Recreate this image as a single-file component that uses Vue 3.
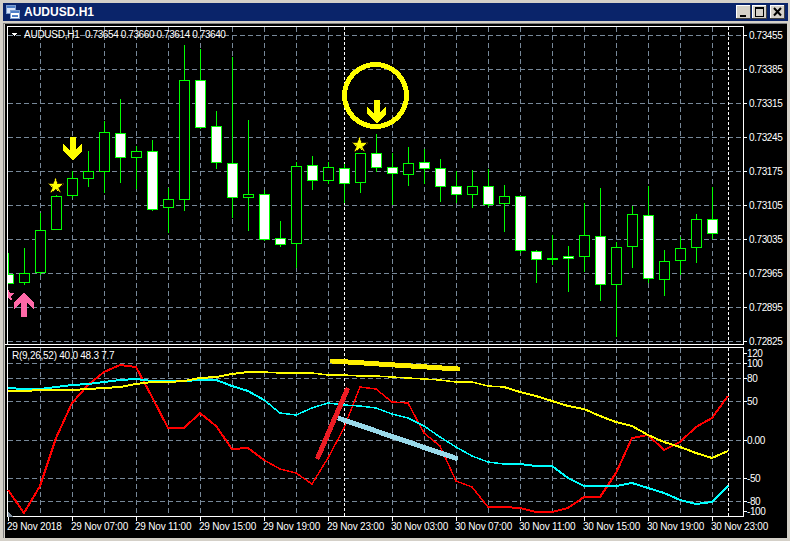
<script setup>
const candles = [
  // [high, low, body top, body bottom, filled]
  [253, 284, 274, 283, 1], [248, 285, 273, 282, 0], [213, 275, 230, 272, 0], [195, 230, 196, 229, 0],
  [171, 198, 178, 195, 0], [151, 187, 171, 178, 0], [121, 193, 132, 171, 0], [99, 183, 133, 157, 1],
  [146, 189, 151, 157, 0], [140, 211, 151, 209, 1], [188, 233, 199, 207, 0], [45, 211, 80, 199, 0],
  [49, 129, 80, 127, 1], [111, 169, 126, 162, 1], [57, 218, 163, 197, 1], [120, 231, 194, 197, 0],
  [190, 241, 194, 239, 1], [221, 247, 238, 244, 1], [162, 268, 166, 243, 0], [156, 190, 165, 180, 1],
  [162, 184, 167, 180, 0], [164, 203, 168, 183, 1], [153, 193, 153, 182, 0], [134, 172, 153, 167, 1],
  [153, 205, 167, 173, 1], [147, 186, 163, 174, 0], [149, 184, 162, 168, 1], [159, 202, 168, 186, 1],
  [171, 203, 186, 194, 1], [170, 208, 186, 194, 0], [169, 207, 186, 204, 1], [185, 232, 196, 203, 0],
  [196, 253, 196, 250, 1], [250, 283, 251, 259, 1], [235, 265, 258, 259, 1], [246, 292, 256, 258, 1],
  [203, 272, 235, 256, 0], [188, 301, 236, 284, 1], [242, 337, 247, 284, 0], [206, 268, 214, 246, 0],
  [186, 283, 215, 278, 1], [250, 296, 261, 279, 0], [237, 275, 248, 260, 0], [214, 263, 219, 247, 0],
  [187, 239, 219, 233, 1]
].map((c, i) => ({ x: 8 + i * 16, high: c[0], low: c[1], top: c[2], bottom: c[3], filled: c[4] }))

const gridX = Array.from({ length: 22 }, (_, i) => 40 + i * 32).filter((x) => x !== 360)
const prices = ['0.73455', '0.73385', '0.73315', '0.73245', '0.73175', '0.73105', '0.73035', '0.72965', '0.72895', '0.72825']
  .map((label, i) => ({ label, y: 35 + i * 34 }))
const levels = [
  { label: '120', y: 353, grid: false }, { label: '100', y: 363, grid: true }, { label: '80', y: 378, grid: true },
  { label: '50', y: 401, grid: true }, { label: '0.00', y: 440, grid: true }, { label: '-50', y: 478, grid: true },
  { label: '-80', y: 501, grid: true }, { label: '-100', y: 511, grid: false }
]
const times = [
  { label: '29 Nov 2018', x: 8 }, { label: '29 Nov 07:00', x: 72 }, { label: '29 Nov 11:00', x: 136 },
  { label: '29 Nov 15:00', x: 200 }, { label: '29 Nov 19:00', x: 264 }, { label: '29 Nov 23:00', x: 328 },
  { label: '30 Nov 03:00', x: 392 }, { label: '30 Nov 07:00', x: 456 }, { label: '30 Nov 11:00', x: 520 },
  { label: '30 Nov 15:00', x: 584 }, { label: '30 Nov 19:00', x: 648 }, { label: '30 Nov 23:00', x: 712 }
]

// each line is thick at both ends and thinner in the middle, as in the screenshot
const lines = [
  {
    color: '#ff0000',
    left: '8,490 24,513 40,486 56,438 72,403 88,385 104,372 120,365 136,367 152,397 168,428 184,428 200,413 216,426 232,449 248,448 264,460',
    mid: '264,460 280,469 296,473 312,484 328,458 344,428 360,387 376,389 392,402 408,403 424,433 440,446 456,481 472,487 488,507 504,507',
    right: '504,507 520,508 536,512 552,512 568,508 584,497 600,497 616,473 632,438 648,435 664,450 680,442 696,427 712,418 728,396'
  },
  {
    color: '#00ffff',
    left: '8,388 24,389 40,389 56,387 72,385 88,384 104,382 120,380 136,379 152,381 168,381 184,381 200,380 216,380 232,386 248,391 264,400',
    mid: '264,400 280,413 296,415 312,408 328,403 344,405 360,406 376,408 392,414 408,418 424,426 440,437 456,447 472,456 488,462 504,464',
    right: '504,464 520,464 536,466 552,466 568,478 584,486 600,486 616,486 632,483 648,488 664,493 680,500 696,504 712,502 728,486'
  },
  {
    color: '#ffff00',
    left: '8,391 24,391 40,390 56,390 72,390 88,389 104,388 120,387 136,384 152,382 168,382 184,381 200,378 216,377 232,374 248,372 264,372',
    mid: '264,372 280,373 312,373 328,375 344,375 360,376 376,376 392,377 408,378 424,379 440,380 456,382 472,382 488,386 504,387',
    right: '504,387 520,392 536,396 552,401 568,406 584,409 600,416 616,422 632,426 648,435 664,442 680,447 696,453 712,458 728,451'
  }
]
</script>

<template>
  <div class="window">
    <div class="titlebar">
      <svg class="app-icon" width="14" height="14" viewBox="0 0 14 14" shape-rendering="crispEdges">
        <rect x="0.5" y="0.5" width="9" height="8" fill="#d8e4f8" stroke="#7f9fd0" />
        <rect x="1" y="1" width="8" height="2" fill="#4f7fc8" />
        <rect x="4.5" y="5.5" width="9" height="8" fill="#fff" stroke="#7f9fd0" />
        <rect x="5" y="6" width="8" height="2" fill="#4f7fc8" />
        <path d="M6 12l1-2 1 2 1-2 1 2 1-2 1 2" fill="none" stroke="#4f7fc8" />
      </svg>
      <span class="title">AUDUSD.H1</span>
      <div class="buttons">
        <button class="btn">
          <svg width="15" height="14" viewBox="0 0 15 14" shape-rendering="crispEdges"><rect x="4" y="10" width="6" height="2" fill="#000" /></svg>
        </button>
        <button class="btn">
          <svg width="15" height="14" viewBox="0 0 15 14" shape-rendering="crispEdges"><path d="M3.5 3.500h8v8h-8z" fill="none" stroke="#000" /><rect x="3" y="2" width="9" height="2" fill="#000" /></svg>
        </button>
        <button class="btn btn-close">
          <svg width="15" height="14" viewBox="0 0 15 14"><path d="M4 3l7 7.500M11 3l-7 7.500" fill="none" stroke="#000" stroke-width="2" /></svg>
        </button>
      </div>
    </div>

    <div class="frame">
      <div class="inner">
        <svg class="chart" width="782" height="514" viewBox="5 24 782 514" shape-rendering="crispEdges">
          <defs>
            <clipPath id="pane"><rect x="8" y="27" width="735" height="317" /></clipPath>
          </defs>

          <!-- pane borders -->
          <path d="M7.500 344.500V26.500H743.500V344.500M5 344.500H743.500" fill="none" stroke="#fff" />
          <path d="M7.500 516.500V347.500H743.500V516.500H7.500" fill="none" stroke="#fff" />

          <!-- grid -->
          <g class="grid">
            <line v-for="x in gridX" :key="'m' + x" :x1="x + 0.5" :x2="x + 0.5" y1="27" y2="344" />
            <line v-for="p in prices" :key="p.label" x1="8" x2="743" :y1="p.y + 0.5" :y2="p.y + 0.5" />
            <line v-for="x in gridX" :key="'s' + x" :x1="x + 0.5" :x2="x + 0.5" y1="348" y2="516" />
            <line v-for="l in levels.filter((l) => l.grid)" :key="l.label" x1="8" x2="743" :y1="l.y + 0.5" :y2="l.y + 0.5" />
          </g>
          <g class="sep">
            <line x1="344.500" x2="344.500" y1="27" y2="344" />
            <line x1="728.500" x2="728.500" y1="27" y2="344" />
            <line x1="344.500" x2="344.500" y1="348" y2="516" />
            <line x1="728.500" x2="728.500" y1="348" y2="516" />
          </g>

          <!-- axis ticks -->
          <g stroke="#fff">
            <line v-for="p in prices" :key="'t' + p.label" x1="744" x2="747" :y1="p.y + 0.5" :y2="p.y + 0.5" />
            <line v-for="l in levels" :key="'t' + l.label" x1="744" x2="747" :y1="l.y + 0.5" :y2="l.y + 0.5" />
            <line v-for="t in times" :key="'t' + t.label" :x1="t.x + 0.5" :x2="t.x + 0.5" y1="517" y2="521" />
          </g>

          <g clip-path="url(#pane)">
            <!-- candles -->
            <g v-for="c in candles" :key="c.x">
              <line :x1="c.x + 0.5" :x2="c.x + 0.5" :y1="c.high" :y2="c.low" stroke="#00ff00" />
              <rect
                :x="c.x - 4.5"
                :y="c.top + 0.5"
                width="10"
                :height="c.bottom - c.top"
                :fill="c.filled ? '#fff' : '#000'"
                stroke="#00ff00"
              />
            </g>

            <!-- marks -->
            <circle cx="375.500" cy="95.500" r="31" fill="none" stroke="#ffff00" stroke-width="5" />
            <path class="arrow" d="M69.500 137h6v13l6.500-6.500v7.500l-9.500 9.500-9.500-9.500v-7.500l6.500 6.500z" />
            <path class="arrow" transform="translate(304 -37)" d="M69.500 137h6v13l6.500-6.500v7.500l-9.500 9.500-9.500-9.500v-7.500l6.500 6.500z" />
            <path class="star" d="M55.500 178l2 5.500h6l-5 3.800 2 5.200-5-3.200-5 3.200 2-5.200-5-3.800h6z" />
            <path class="star" transform="translate(304 -41)" d="M55.500 178l2 5.500h6l-5 3.800 2 5.200-5-3.200-5 3.200 2-5.200-5-3.800h6z" />
            <path class="pink" d="M24 292.500l10 9.500v7l-7-6.500v14.500h-6v-14.500l-7 6.500v-7z" />
            <path class="pink" d="M8 288.500l1.500 4 5.500.5-4 3.500 1 4-4-2.500z" />
          </g>

          <!-- indicator lines -->
          <g v-for="l in lines" :key="l.color" fill="none" :stroke="l.color">
            <polyline :points="l.left" stroke-width="2" />
            <polyline :points="l.mid" stroke-width="1.5" />
            <polyline :points="l.right" stroke-width="2" />
          </g>

          <!-- hand drawn strokes -->
          <g fill="none" stroke-width="5">
            <line x1="332" y1="361" x2="458" y2="369" stroke="#ffef00" stroke-linecap="round" />
            <line x1="318" y1="457" x2="347" y2="390" stroke="#ed1c24" stroke-linecap="round" />
            <line x1="338" y1="418" x2="458" y2="459" stroke="#99d9ea" />
          </g>
          <path d="M8 512l5 5H8z" fill="#8090a0" />

          <!-- header triangle -->
          <path d="M11 33h7l-3.500 3z" fill="#fff" />

          <!-- text -->
          <g class="label" shape-rendering="auto">
            <text class="symbol" x="24" y="38">AUDUSD,H1</text>
            <text class="axis" x="85" y="38">0.73654 0.73660 0.73614 0.73640</text>
            <text class="symbol" x="12" y="359">R(9,26,52) 40.0 48.3 7.7</text>
            <text v-for="p in prices" :key="'l' + p.label" class="axis" x="749" :y="p.y + 4">{{ p.label }}</text>
            <text v-for="l in levels" :key="'l' + l.label" class="axis" x="747" :y="l.y + 4">{{ l.label }}</text>
            <text v-for="t in times" :key="'l' + t.label" class="time" :x="t.x - 1" y="530">{{ t.label }}</text>
          </g>
        </svg>
      </div>
    </div>
  </div>
</template>

<style>
html, body { margin: 0; background: #d4d0c8; }
</style>

<style scoped>
.window {
  width: 790px;
  height: 541px;
  box-sizing: border-box;
  padding: 3px 3px 3px 3px;
  background: #d4d0c8;
  display: flex;
  flex-direction: column;
  font-family: "Liberation Sans", Arial, sans-serif;
}
.titlebar {
  height: 18px;
  flex: none;
  margin-right: -1px;
  display: flex;
  align-items: center;
  padding: 0 3px 0 3px;
  background: #0a246a;
  color: #fff;
}
.app-icon { flex: none; }
.title {
  margin-left: 4px;
  font-size: 12px;
  font-weight: 700;
}
.buttons { margin-left: auto; display: flex; }
.btn {
  width: 15px;
  height: 14px;
  padding: 0;
  border: 0;
  margin-left: 1px;
  background: #d4d0c8;
  box-shadow: inset -1px -1px 0 #404040, inset 1px 1px 0 #fff;
  display: block;
}
.btn-close { margin-left: 3px; }
.btn svg { display: block; }
.frame {
  flex: 1;
  margin-top: 2px;
  border-top: 1px solid #808080;
  border-left: 1px solid #808080;
  background: #000;
  overflow: hidden;
}
.inner {
  height: 100%;
  border-left: 1px solid #d4d0c8;
}
.chart { display: block; }
.grid line { stroke: #778899; stroke-dasharray: 5 3; }
.sep line { stroke: #fff; stroke-dasharray: 3 2; }
.arrow { fill: #ffff00; }
.star { fill: #ffff00; stroke: #6b5a00; stroke-width: 0.5; }
.pink { fill: #ff69a8; }
.label text {
  fill: #fff;
  font-family: "Liberation Sans", Arial, sans-serif;
  font-size: 10px;
}
.label .axis { letter-spacing: -0.4px; }
.label .symbol { letter-spacing: -0.25px; }
.label .time { letter-spacing: -0.2px; }
</style>
